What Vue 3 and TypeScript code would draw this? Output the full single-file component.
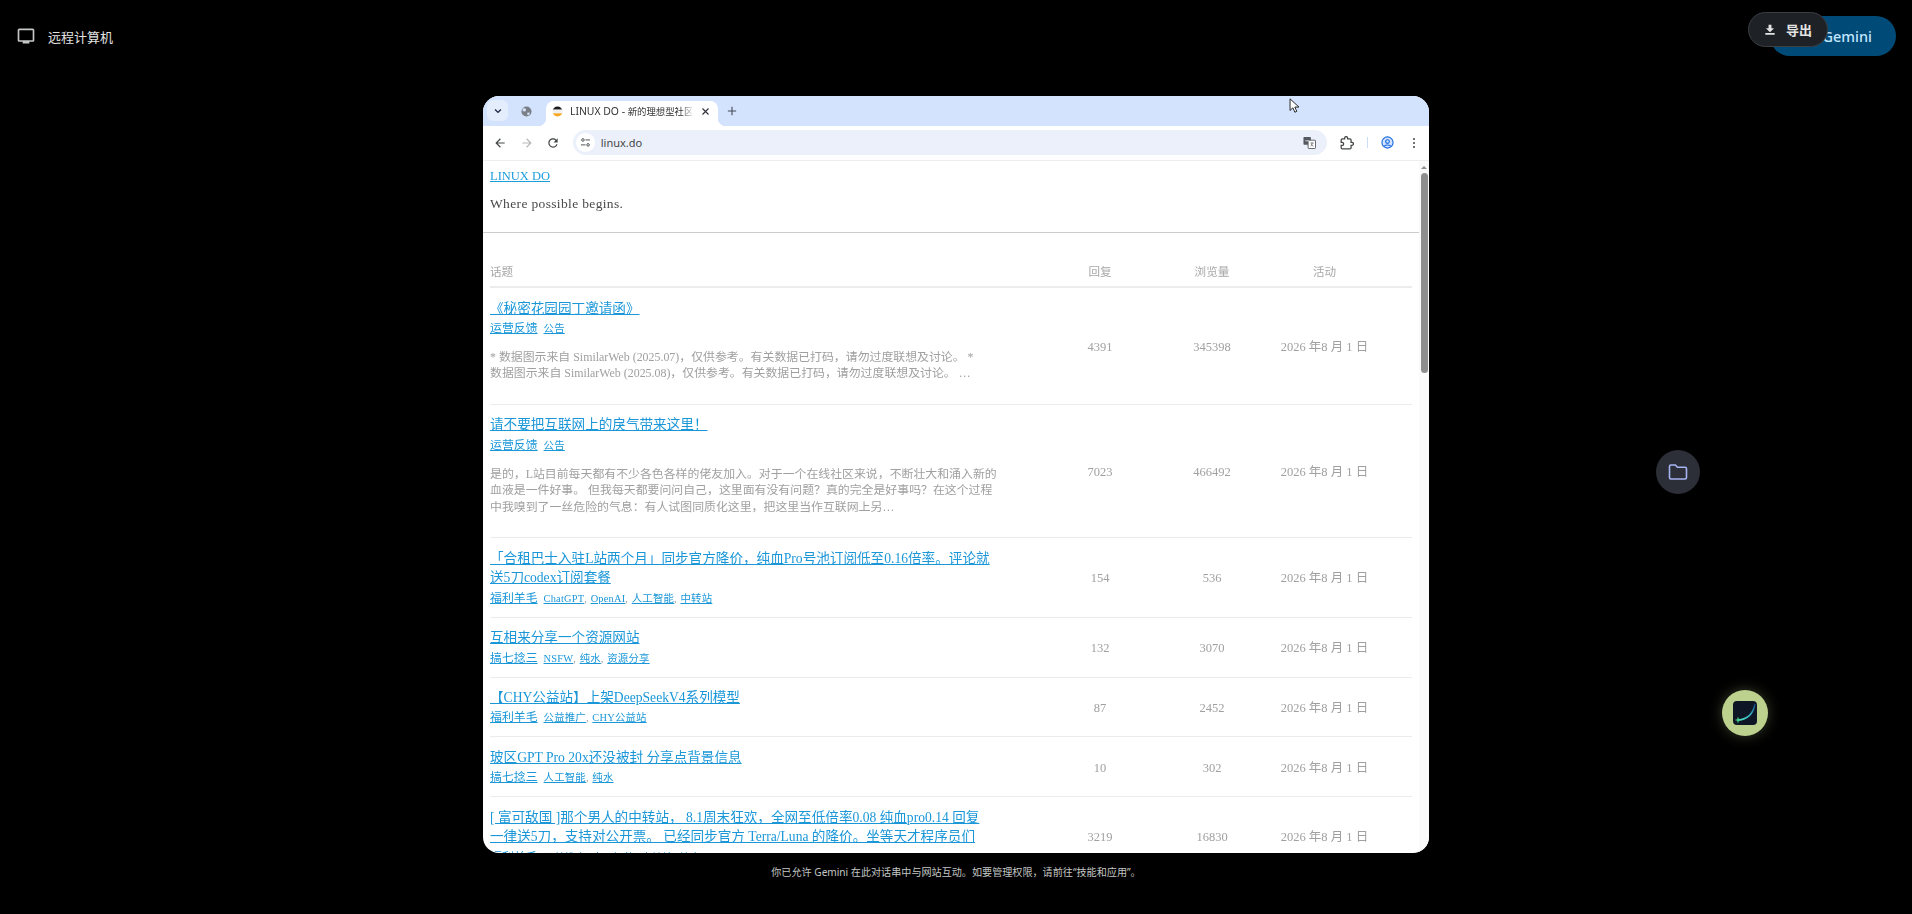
<script setup lang="ts">
interface Topic {
  title: string
  category: string
  tags: string[]
  excerpt?: string
  replies: number
  views: number
}

const topics: Topic[] = [
  {
    title: '《秘密花园园丁邀请函》',
    category: '运营反馈',
    tags: ['公告'],
    excerpt:
      '* 数据图示来自 SimilarWeb (2025.07)，仅供参考。有关数据已打码，请勿过度联想及讨论。 *\n数据图示来自 SimilarWeb (2025.08)，仅供参考。有关数据已打码，请勿过度联想及讨论。 …',
    replies: 4391,
    views: 345398,
  },
  {
    title: '请不要把互联网上的戾气带来这里！',
    category: '运营反馈',
    tags: ['公告'],
    excerpt:
      '是的，L站目前每天都有不少各色各样的佬友加入。对于一个在线社区来说，不断壮大和涌入新的\n血液是一件好事。 但我每天都要问问自己，这里面有没有问题？真的完全是好事吗？在这个过程\n中我嗅到了一丝危险的气息：有人试图同质化这里，把这里当作互联网上另…',
    replies: 7023,
    views: 466492,
  },
  {
    title: '「合租巴士入驻L站两个月」同步官方降价，纯血Pro号池订阅低至0.16倍率。评论就\n送5刀codex订阅套餐',
    category: '福利羊毛',
    tags: ['ChatGPT', 'OpenAI', '人工智能', '中转站'],
    replies: 154,
    views: 536,
  },
  {
    title: '互相来分享一个资源网站',
    category: '搞七捻三',
    tags: ['NSFW', '纯水', '资源分享'],
    replies: 132,
    views: 3070,
  },
  {
    title: '【CHY公益站】上架DeepSeekV4系列模型',
    category: '福利羊毛',
    tags: ['公益推广', 'CHY公益站'],
    replies: 87,
    views: 2452,
  },
  {
    title: '玻区GPT Pro 20x还没被封 分享点背景信息',
    category: '搞七捻三',
    tags: ['人工智能', '纯水'],
    replies: 10,
    views: 302,
  },
  {
    title: '[ 富可敌国 ]那个男人的中转站， 8.1周末狂欢，全网至低倍率0.08 纯血pro0.14 回复\n一律送5刀，支持对公开票。 已经同步官方 Terra/Luna 的降价。坐等天才程序员们',
    category: '福利羊毛',
    tags: ['公益推广', '人工智能', '中转站', '纯水'],
    replies: 3219,
    views: 16830,
  },
]

const activity = '2026 年8 月 1 日'
</script>

<template>
  <div class="screen">
    <header class="topbar">
      <svg class="monitor" viewBox="0 0 24 24" width="20" height="20">
        <path fill="#c4c7c5" d="M20 3H4c-1.1 0-2 .9-2 2v12c0 1.1.9 2 2 2h4v2h8v-2h4c1.1 0 2-.9 2-2V5c0-1.1-.9-2-2-2zm0 14H4V5h16v12z" />
      </svg>
      <span class="topbar-title">远程计算机</span>
    </header>

    <div class="gemini-pill">Gemini</div>
    <button class="export-pill">
      <svg viewBox="0 0 24 24" width="14" height="14">
        <path fill="#e3e3e3" d="M4 20h16v-3H4v3zM19 9h-4.5V3h-5v6H5l7 7 7-7z" />
      </svg>
      <span>导出</span>
    </button>

    <main class="browser">
      <div class="tabstrip">
        <button class="tab-search">
          <svg viewBox="0 0 12 12" width="10" height="10">
            <path d="M2.5 4.2 6 7.7l3.5-3.5" fill="none" stroke="#1f2a44" stroke-width="1.6" />
          </svg>
        </button>
        <span class="tab-idle">
          <svg viewBox="0 0 12 12" width="11" height="11">
            <circle cx="6" cy="6" r="5.5" fill="#7b7f86" />
            <path d="M3 2.2 5.6 3.4 5 5.6 2.8 6 1.4 4.4zM7 7l2.8.4L8.6 10.2 6.8 9.6z" fill="#d3e3fd" />
          </svg>
        </span>
        <div class="tab-active">
          <svg class="favicon" viewBox="0 0 12 12" width="11" height="11">
            <clipPath id="fav"><circle cx="6" cy="6" r="5.5" /></clipPath>
            <g clip-path="url(#fav)">
              <rect width="12" height="4" fill="#1c1c1e" />
              <rect y="4" width="12" height="4" fill="#f0f0f0" />
              <rect y="8" width="12" height="4" fill="#f5a623" />
            </g>
          </svg>
          <span class="tab-title">LINUX DO - <span class="tab-cjk">新的理想型社区</span></span>
          <svg viewBox="0 0 12 12" width="9" height="9">
            <path d="M2 2l8 8M10 2l-8 8" stroke="#33373d" stroke-width="1.6" />
          </svg>
        </div>
        <svg class="tab-new" viewBox="0 0 12 12" width="10" height="10">
          <path d="M6 1v10M1 6h10" stroke="#444a55" stroke-width="1.3" />
        </svg>
      </div>

      <div class="toolbar">
        <span class="nav-btn">
          <svg viewBox="0 0 24 24" width="14" height="14"><path fill="#444746" d="M20 11H7.83l5.59-5.59L12 4l-8 8 8 8 1.41-1.41L7.83 13H20v-2z" /></svg>
        </span>
        <span class="nav-btn">
          <svg viewBox="0 0 24 24" width="14" height="14"><path fill="#b5b7b9" d="M12 4l-1.41 1.41L16.17 11H4v2h12.17l-5.58 5.59L12 20l8-8z" /></svg>
        </span>
        <span class="nav-btn">
          <svg viewBox="0 0 24 24" width="14" height="14"><path fill="#444746" d="M17.65 6.35C16.2 4.9 14.21 4 12 4c-4.42 0-7.99 3.58-7.99 8s3.57 8 7.99 8c3.73 0 6.84-2.55 7.73-6h-2.08c-.82 2.33-3.04 4-5.65 4-3.31 0-6-2.69-6-6s2.69-6 6-6c1.66 0 3.14.69 4.22 1.78L13 11h7V4l-2.35 2.35z" /></svg>
        </span>
        <div class="omnibox">
          <span class="site-chip">
            <svg viewBox="0 0 12 12" width="11" height="11">
              <circle cx="3.2" cy="3.2" r="1.4" fill="none" stroke="#444746" />
              <path d="M6 3.2h5M1 8.6h5" stroke="#444746" />
              <circle cx="8.8" cy="8.6" r="1.4" fill="none" stroke="#444746" />
            </svg>
          </span>
          <span class="url">linux.do</span>
          <svg class="translate" viewBox="0 0 14 14" width="13" height="13">
            <rect x="0.5" y="1" width="8" height="8.5" rx="0.8" fill="#555a60" />
            <rect x="5.5" y="4.5" width="8" height="9" rx="0.8" fill="#fff" stroke="#555a60" />
            <path d="M2.5 5.2h4" stroke="#fff" fill="none" stroke-width="0.8" />
            <path d="M8 7.5h3.6M9.8 7.5c0 2-.8 3-1.6 3.6M9 9c.6 1 1.2 1.6 2.2 2" stroke="#555a60" fill="none" stroke-width="0.8" />
          </svg>
        </div>
        <div class="toolbar-right">
          <span class="tool-slot ext">
            <svg viewBox="0 0 24 24" width="14" height="14">
              <path fill="none" stroke="#444746" stroke-width="2.2" d="M20.5 11H19V7c0-1.1-.9-2-2-2h-4V3.5C13 2.12 11.88 1 10.5 1S8 2.12 8 3.5V5H4c-1.1 0-1.99.9-1.99 2v3.8H3.5c1.49 0 2.7 1.21 2.7 2.7s-1.21 2.7-2.7 2.7H2V20c0 1.1.9 2 2 2h13c1.1 0 2-.9 2-2v-4h1.5c1.38 0 2.5-1.12 2.5-2.5S21.88 11 20.5 11z" />
            </svg>
          </span>
          <span class="divider"></span>
          <span class="tool-slot profile">
            <svg viewBox="0 0 14 14" width="13" height="13">
              <circle cx="7" cy="7" r="6" fill="#d3e3fd" stroke="#1a6be0" stroke-width="1.2" />
              <circle cx="7" cy="6" r="2" fill="none" stroke="#1a6be0" stroke-width="1.2" />
              <path d="M3.4 11c1.8-1.8 5.4-1.8 7.2 0" fill="none" stroke="#1a6be0" stroke-width="1.2" />
            </svg>
          </span>
          <span class="tool-slot dots">
            <svg viewBox="0 0 4 12" width="4" height="12">
              <circle cx="2" cy="2" r="1" fill="#444746" />
              <circle cx="2" cy="6" r="1" fill="#444746" />
              <circle cx="2" cy="10" r="1" fill="#444746" />
            </svg>
          </span>
        </div>
      </div>

      <div class="viewport">
        <div class="page">
          <div class="site-head">
            <a class="brand">LINUX DO</a>
            <p class="tagline">Where possible begins.</p>
          </div>
          <hr class="head-rule" />
          <div class="topic-table">
            <div class="topic-row heading">
              <span class="topic-col">话题</span>
              <span class="num-col">回复</span>
              <span class="num-col">浏览量</span>
              <span class="num-col">活动</span>
            </div>
            <div v-for="topic in topics" :key="topic.title" class="topic-row">
              <div class="topic-col">
                <a class="topic-title">{{ topic.title }}</a>
                <div class="topic-meta">
                  <a class="category">{{ topic.category }}</a>
                  <span class="tags">
                    <template v-for="(tag, i) in topic.tags" :key="tag">
                      <a class="tag">{{ tag }}</a><span v-if="i < topic.tags.length - 1" class="comma">, </span>
                    </template>
                  </span>
                </div>
                <p v-if="topic.excerpt" class="excerpt">{{ topic.excerpt }}</p>
              </div>
              <span class="num-col">{{ topic.replies }}</span>
              <span class="num-col">{{ topic.views }}</span>
              <span class="num-col">{{ activity }}</span>
            </div>
          </div>
        </div>
        <div class="scrollbar">
          <span class="scroll-up"></span>
          <span class="scroll-thumb"></span>
        </div>
      </div>

      <svg class="cursor" viewBox="0 0 12 18" width="11" height="16">
        <path d="M1 1v13l3.2-3 2.2 5 2.2-1-2.2-4.8H11z" fill="#fff" stroke="#111" stroke-width="1" />
      </svg>
    </main>

    <footer class="notice">你已允许 Gemini 在此对话串中与网站互动。如要管理权限，请前往“技能和应用”。</footer>

    <button class="float-btn folder">
      <svg viewBox="0 0 24 24" width="24" height="24">
        <path fill="none" stroke="#a6b5f2" stroke-width="1.6" d="M3.5 6.5a1.5 1.5 0 0 1 1.5-1.5h4.4l2 2.2H19a1.5 1.5 0 0 1 1.5 1.5v8.8a1.5 1.5 0 0 1-1.5 1.5H5a1.5 1.5 0 0 1-1.5-1.5z" />
      </svg>
    </button>
    <button class="float-btn app">
      <span class="app-tile">
        <svg viewBox="0 0 24 24" width="24" height="24">
          <defs>
            <linearGradient id="arc" x1="0" y1="1" x2="1" y2="0">
              <stop offset="0" stop-color="#4fe0c0" />
              <stop offset="0.6" stop-color="#2fa8c0" />
              <stop offset="1" stop-color="#16407e" />
            </linearGradient>
          </defs>
          <path d="M5 19C13 18.5 20 14 22 3" fill="none" stroke="url(#arc)" stroke-width="1.5" />
          <path d="M5 16.5v5M2.5 19h5" stroke="#4be08a" stroke-width="1.2" />
        </svg>
      </span>
    </button>
  </div>
</template>

<style scoped>
.screen {
  position: relative;
  width: 1912px;
  height: 914px;
  overflow: hidden;
  background: #000;
  display: flex;
  flex-direction: column;
  align-items: center;
  font-family: "Noto Sans", "Noto Sans CJK SC", sans-serif;
}

.topbar {
  align-self: stretch;
  height: 72px;
  flex: none;
  display: flex;
  align-items: center;
  gap: 12px;
  padding-left: 16px;
}

.monitor {
  flex: none;
}

.topbar-title {
  font-size: 13px;
  color: #e3e3e3;
}

.gemini-pill {
  position: absolute;
  top: 16px;
  left: 1770px;
  width: 126px;
  height: 40px;
  box-sizing: border-box;
  border-radius: 20px;
  background: #004a77;
  color: #c2e7ff;
  font-size: 14.5px;
  font-weight: 500;
  line-height: 40px;
  text-align: right;
  padding-right: 24px;
}

.export-pill {
  position: absolute;
  top: 12px;
  left: 1748px;
  width: 80px;
  height: 35px;
  box-sizing: border-box;
  border: 1px solid #3b3e42;
  border-radius: 18px;
  background: #1e2125;
  color: #e3e3e3;
  font: 600 13px "Noto Sans CJK SC", sans-serif;
  display: flex;
  align-items: center;
  gap: 9px;
  padding: 0 0 0 14px;
}

.browser {
  position: relative;
  flex: none;
  width: 946px;
  height: 757px;
  margin-top: 24px;
  border-radius: 16px;
  overflow: hidden;
  background: #fff;
  display: flex;
  flex-direction: column;
  filter: blur(0.3px);
}

.tabstrip {
  flex: none;
  height: 30px;
  box-sizing: border-box;
  background: #d3e3fd;
  display: flex;
  align-items: flex-end;
  padding-left: 4px;
}

.tab-search {
  width: 21px;
  height: 21px;
  margin-bottom: 5px;
  border: 0;
  padding: 0;
  border-radius: 6px;
  background: #e4edfc;
  display: flex;
  align-items: center;
  justify-content: center;
}

.tab-idle {
  width: 11px;
  height: 11px;
  margin: 0 14px 9px 13px;
  display: flex;
}

.tab-active {
  position: relative;
  width: 172px;
  height: 25px;
  box-sizing: border-box;
  background: #fff;
  border-radius: 8px 8px 0 0;
  display: flex;
  align-items: center;
  padding: 0 8px 5px 6px;
  font-size: 10.4px;
  color: #333;
}

.tab-active::before,
.tab-active::after {
  content: "";
  position: absolute;
  bottom: 0;
  width: 8px;
  height: 8px;
}

.tab-active::before {
  left: -8px;
  background: radial-gradient(circle at 0 0, #d3e3fd 8px, #fff 8.5px);
}

.tab-active::after {
  right: -8px;
  background: radial-gradient(circle at 100% 0, #d3e3fd 8px, #fff 8.5px);
}

.favicon {
  flex: none;
  margin-right: 7px;
}

.tab-title {
  flex: 1;
  min-width: 0;
  white-space: nowrap;
  overflow: hidden;
  -webkit-mask-image: linear-gradient(to right, #000 90%, transparent);
  mask-image: linear-gradient(to right, #000 90%, transparent);
  margin-right: 7px;
}

.tab-cjk {
  font-size: 9.4px;
}

.tab-new {
  margin: 0 0 10px 9px;
}

.toolbar {
  flex: none;
  height: 35px;
  box-sizing: border-box;
  border-bottom: 1px solid #eeeeee;
  display: flex;
  align-items: center;
  padding: 0 0 1px 4px;
}

.nav-btn {
  width: 26.6px;
  display: flex;
  justify-content: center;
}

.omnibox {
  flex: 1;
  height: 25px;
  margin-left: 6px;
  border-radius: 13px;
  background: #ebf0fa;
  display: flex;
  align-items: center;
  padding: 0 11px 0 3px;
}

.site-chip {
  width: 19px;
  height: 19px;
  border-radius: 50%;
  background: #fff;
  display: flex;
  align-items: center;
  justify-content: center;
}

.url {
  flex: 1;
  margin-left: 6px;
  font-size: 11px;
  color: #444746;
}

.toolbar-right {
  flex: none;
  width: 102px;
  display: flex;
  align-items: center;
}

.tool-slot {
  display: flex;
  justify-content: center;
}

.ext {
  width: 40px;
}

.divider {
  width: 1px;
  height: 11px;
  background: #c9dcf8;
}

.profile {
  width: 38px;
}

.dots {
  width: 15px;
}

.viewport {
  flex: 1;
  min-height: 0;
  display: flex;
  color: #333;
  font-family: "Liberation Serif", "Noto Sans CJK SC", serif;
}

.page {
  flex: 1;
  min-width: 0;
  overflow: hidden;
}

.site-head {
  padding: 6px 0 19px 7px;
}

.brand {
  display: block;
  font-size: 12.5px;
  line-height: 18px;
  color: #1c9ddc;
  text-decoration: underline;
}

.tagline {
  margin: 10px 0 0;
  font-size: 13.5px;
  line-height: 18px;
  letter-spacing: 0.35px;
  color: #4a4a4a;
}

.head-rule {
  margin: 0;
  border: 0;
  border-top: 1px solid #cccccc;
}

.topic-table {
  margin: 0 7px;
}

.topic-row {
  display: grid;
  grid-template-columns: 554px 112px 112px 113px;
  align-items: center;
  padding: 10.5px 31px 9px 0;
  border-bottom: 1px solid #ececec;
}

.topic-row.heading {
  padding: 31px 31px 4px 0;
  border-bottom: 2px solid #ececec;
  font-size: 11.6px;
  line-height: 18px;
  color: #a8a8a8;
}

.topic-col {
  padding-right: 44px;
}

.num-col {
  text-align: center;
  font-size: 12.5px;
  line-height: 16px;
  color: #a0a0a0;
}

.heading .num-col {
  font-size: 11.6px;
  line-height: 18px;
  color: #a8a8a8;
}

.topic-title {
  display: block;
  font-size: 13.6px;
  line-height: 19.4px;
  white-space: pre-line;
  color: #1b97d8;
  text-decoration: underline;
}

.topic-meta {
  display: flex;
  align-items: baseline;
  gap: 6px;
  height: 20px;
  line-height: 20px;
  color: #1b97d8;
}

.category {
  font-size: 11.9px;
  text-decoration: underline;
}

.tags {
  font-size: 10.4px;
  letter-spacing: 0.2px;
}

.tag {
  text-decoration: underline;
}

.comma {
  color: #999;
  letter-spacing: 0.6px;
}

.excerpt {
  margin: 11px 0 13px;
  font-size: 11.9px;
  line-height: 16.5px;
  white-space: pre-line;
  color: #a0a0a0;
}

.scrollbar {
  flex: none;
  width: 10px;
  background: #fafafa;
  display: flex;
  flex-direction: column;
  align-items: center;
}

.scroll-up {
  margin-top: 5px;
  border: 3px solid transparent;
  border-top: 0;
  border-bottom: 3px solid #909090;
}

.scroll-thumb {
  margin-top: 4px;
  width: 7px;
  height: 200px;
  border-radius: 4px;
  background: #8e8e8e;
}

.cursor {
  position: absolute;
  top: 2px;
  left: 806px;
}

.notice {
  flex: none;
  margin-top: 9px;
  font-size: 10.1px;
  line-height: 20px;
  color: #c4c7c5;
}

.float-btn {
  position: absolute;
  border: 0;
  padding: 0;
  border-radius: 50%;
  display: flex;
  align-items: center;
  justify-content: center;
}

.folder {
  top: 450px;
  left: 1656px;
  width: 44px;
  height: 44px;
  background: #2c2f38;
}

.app {
  top: 690px;
  left: 1722px;
  width: 46px;
  height: 46px;
  background: #bcd18e;
  box-shadow: 0 0 14px rgba(188, 209, 142, 0.3);
}

.app-tile {
  width: 24px;
  height: 24px;
  border-radius: 4px;
  background: #0e1626;
  display: flex;
}
</style>
